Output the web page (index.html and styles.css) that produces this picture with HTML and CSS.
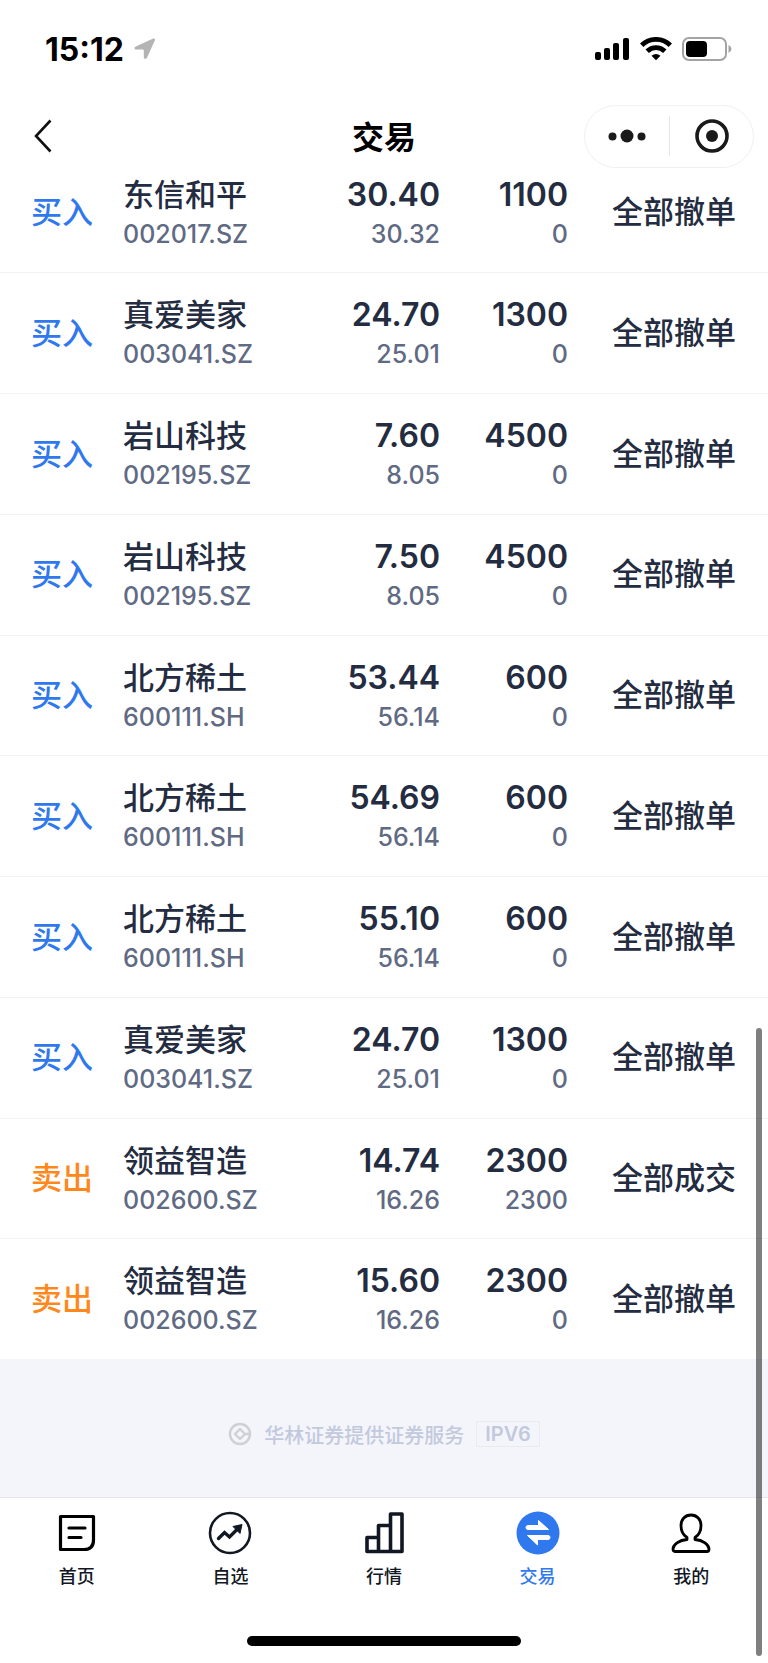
FILE: index.html
```html
<!DOCTYPE html>
<html lang="zh-CN">
<head>
  <meta charset="UTF-8">
  <meta name="viewport" content="width=device-width, initial-scale=1.0">
  <title>交易</title>
  <link rel="stylesheet" href="styles.css">
</head>
<body>
  <header class="top">
    <div class="status-bar">
      <span class="time">15:12</span>
      <svg class="location" width="22" height="22" viewBox="0 0 22 22" fill="#b4b4b4"><path d="M19.2.6 1.8 8.6C-.2 9.6.2 11.600 2.200 11.600H8.800Q9.800 11.600 9.800 12.600V19C9.800 21.200 12 21.600 13 19.800L20.800 2.600C21.500 1 20.600 0 19.200.6Z"/></svg>
      <div class="status-icons">
        <svg width="35" height="24" viewBox="0 0 35 24"><rect x="0" y="15" width="6" height="8" rx="2"/><rect x="9" y="11" width="6" height="12" rx="2"/><rect x="18" y="6" width="6" height="17" rx="2"/><rect x="28" y="1" width="6" height="22" rx="2"/></svg>
        <svg width="32" height="24" viewBox="0 0 32 24"><g fill="none" stroke="#000" stroke-width="4.800"><path d="M1.700 8.200A20.500 20.500 0 0 1 30.300 8.200"/><path d="M7.200 14.200A12.500 12.500 0 0 1 24.800 14.200"/></g><path d="M11.500 18.800Q16 15.400 20.500 18.800L16 23.200Z"/></svg>
        <svg width="50" height="24" viewBox="0 0 50 24"><rect x="1" y="1" width="43" height="22" rx="6" fill="none" stroke="#a3a3a3" stroke-width="2"/><rect x="4" y="4" width="21" height="16" rx="4"/><path d="M46.500 8Q49.500 9.500 49.500 12T46.500 16Z" fill="#a3a3a3"/></svg>
      </div>
    </div>
    <div class="nav-bar">
      <button class="back" type="button" aria-label="返回">
        <svg width="18" height="34" viewBox="0 0 18 34"><path d="M16.500 1.500 2 17 16.500 32.500" fill="none" stroke="#111" stroke-width="2.600"/></svg>
      </button>
      <h1>交易</h1>
      <div class="capsule">
        <button type="button" aria-label="更多">
          <svg width="38" height="14" viewBox="0 0 38 14" fill="#1a1a1a"><circle cx="4.500" cy="7.500" r="4"/><circle cx="19" cy="7" r="6.500"/><circle cx="33.500" cy="7.500" r="4"/></svg>
        </button>
        <button type="button" aria-label="关闭">
          <svg width="34" height="34" viewBox="0 0 34 34" fill="#1a1a1a"><circle cx="17" cy="17" r="15" fill="none" stroke="#1a1a1a" stroke-width="3.600"/><circle cx="17" cy="17" r="6"/></svg>
        </button>
      </div>
    </div>
  </header>

  <table class="orders">
    <tbody>
      <tr><td class="side buy">买入</td><td class="stock"><b>东信和平</b><small>002017.SZ</small></td><td class="num"><b>30.40</b><small>30.32</small></td><td class="num"><b>1100</b><small>0</small></td><td class="state">全部撤单</td></tr>
      <tr><td class="side buy">买入</td><td class="stock"><b>真爱美家</b><small>003041.SZ</small></td><td class="num"><b>24.70</b><small>25.01</small></td><td class="num"><b>1300</b><small>0</small></td><td class="state">全部撤单</td></tr>
      <tr><td class="side buy">买入</td><td class="stock"><b>岩山科技</b><small>002195.SZ</small></td><td class="num"><b>7.60</b><small>8.05</small></td><td class="num"><b>4500</b><small>0</small></td><td class="state">全部撤单</td></tr>
      <tr><td class="side buy">买入</td><td class="stock"><b>岩山科技</b><small>002195.SZ</small></td><td class="num"><b>7.50</b><small>8.05</small></td><td class="num"><b>4500</b><small>0</small></td><td class="state">全部撤单</td></tr>
      <tr><td class="side buy">买入</td><td class="stock"><b>北方稀土</b><small>600111.SH</small></td><td class="num"><b>53.44</b><small>56.14</small></td><td class="num"><b>600</b><small>0</small></td><td class="state">全部撤单</td></tr>
      <tr><td class="side buy">买入</td><td class="stock"><b>北方稀土</b><small>600111.SH</small></td><td class="num"><b>54.69</b><small>56.14</small></td><td class="num"><b>600</b><small>0</small></td><td class="state">全部撤单</td></tr>
      <tr><td class="side buy">买入</td><td class="stock"><b>北方稀土</b><small>600111.SH</small></td><td class="num"><b>55.10</b><small>56.14</small></td><td class="num"><b>600</b><small>0</small></td><td class="state">全部撤单</td></tr>
      <tr><td class="side buy">买入</td><td class="stock"><b>真爱美家</b><small>003041.SZ</small></td><td class="num"><b>24.70</b><small>25.01</small></td><td class="num"><b>1300</b><small>0</small></td><td class="state">全部撤单</td></tr>
      <tr><td class="side sell">卖出</td><td class="stock"><b>领益智造</b><small>002600.SZ</small></td><td class="num"><b>14.74</b><small>16.26</small></td><td class="num"><b>2300</b><small>2300</small></td><td class="state">全部成交</td></tr>
      <tr><td class="side sell">卖出</td><td class="stock"><b>领益智造</b><small>002600.SZ</small></td><td class="num"><b>15.60</b><small>16.26</small></td><td class="num"><b>2300</b><small>0</small></td><td class="state">全部撤单</td></tr>
    </tbody>
  </table>

  <div class="provider">
    <svg width="24" height="24" viewBox="0 0 24 24" fill="none" stroke="#cfd0d5"><circle cx="12" cy="12" r="10" stroke-width="2.400"/><path d="M17 12 12 17 7 12 12 7ZM16 12H22" stroke-width="2.400" stroke-linejoin="round"/></svg>
    <span>华林证券提供证券服务</span>
    <span class="tag">IPV6</span>
  </div>

  <nav class="tabs">
    <a href="#home">
      <svg width="44" height="44" viewBox="0 0 44 44" fill="none" stroke="#000" stroke-width="3.200" stroke-linecap="round" stroke-linejoin="round"><path d="M5.500 5.500H38.500V29Q38.500 38.500 29 38.500H5.500Z"/><path d="M14 17H30M14 26.500H26"/></svg>
      首页
    </a>
    <a href="#watchlist">
      <svg width="44" height="44" viewBox="0 0 44 44" fill="none" stroke="#111723"><circle cx="22" cy="22" r="20" stroke-width="2.600"/><path d="M10.500 27.500 16.500 21.500 21.500 26 29.500 18" stroke-width="3.400" stroke-linecap="round"/><path d="M25 15.500 34 13.500 32 22.500Z" fill="#111723" stroke-linejoin="round"/></svg>
      自选
    </a>
    <a href="#market">
      <svg width="44" height="44" viewBox="0 0 44 44" fill="none" stroke="#111723" stroke-width="3.600" stroke-linejoin="round"><path d="M5 40.500V26.500H16.500V40.500ZM16.500 40.500V14.500H28.500V40.500ZM28.500 40.500V3H40V40.500Z"/></svg>
      行情
    </a>
    <a class="active" href="#trade">
      <svg width="44" height="44" viewBox="0 0 44 44"><circle cx="22" cy="22" r="21.500" fill="#2f78ee"/><path d="M12 14.500H22.500V9.500Q27 13.500 32.500 18.500H12A2 2 0 0 1 12 14.500ZM32 24.500A2 2 0 0 1 32 28.500H21.500V34Q17 29.500 11.500 24.500Z" fill="#fff" stroke="#fff" stroke-linejoin="round"/></svg>
      交易
    </a>
    <a href="#mine">
      <svg width="44" height="44" viewBox="0 0 44 44" fill="none" stroke="#000" stroke-width="2.800" stroke-linejoin="round"><path d="M18 26.500C14 24 12 19.500 12 14.500C12 8.500 16 4 22 4S32 8.500 32 14.500C32 19.500 30 24 26 26.500V28.500C34 29 40 34 40 38Q40 40.500 38 40.500H6Q4 40.500 4 38C4 34 10 29 18 28.500Z"/></svg>
      我的
    </a>
  </nav>
  <div class="home-indicator"></div>
  <div class="scrollbar"></div>
</body>
</html>
```

FILE: styles.css
```css
* {
  box-sizing: border-box;
}
body {
  margin: 0;
  min-height: 100vh;
  display: flex;
  flex-direction: column;
  background: #fff;
  color: #232c40;
  font-family: Inter, "Noto Sans CJK SC", sans-serif;
  font-weight: 500;
}
svg {
  display: block;
  flex: none;
}
button {
  padding: 0;
  border: none;
  background: none;
  display: flex;
  align-items: center;
  justify-content: center;
}

/* status bar and title */
.status-bar {
  display: flex;
  align-items: center;
  height: 104px;
  padding: 0 36px 6px 45px;
  color: #000;
}
.time {
  font-size: 32px;
  font-weight: 700;
}
.location {
  margin-left: 10px;
}
.status-icons {
  display: flex;
  align-items: center;
  gap: 10px;
  margin-left: auto;
}
.nav-bar {
  display: grid;
  grid-template-columns: 1fr auto 1fr;
  align-items: center;
  height: 64px;
  padding: 0 14px 0 34px;
}
.back {
  justify-self: start;
}
h1 {
  margin: 0;
  padding: 4px 20px 0 0;
  color: #000;
  font-size: 32px;
  line-height: 40px;
  font-weight: 700;
}
.capsule {
  display: flex;
  justify-self: end;
  width: 170px;
  height: 63px;
  border: 1px solid #f0f0f0;
  border-radius: 32px;
  background: #fff;
}
.capsule button {
  flex: 1;
}
.capsule button + button::before {
  content: "";
  width: 1px;
  height: 40px;
  margin-right: auto;
  background: #e6e6e6;
}
.capsule button + button svg {
  margin-right: auto;
}

/* orders, first row starts under the header */
.orders {
  flex: 1;
  width: 100%;
  margin-top: -15px;
  border-collapse: collapse;
  table-layout: fixed;
}
td {
  padding: 0;
  vertical-align: middle;
  border-bottom: 1px solid #f1f2f5;
  white-space: nowrap;
}
tr:last-child td {
  border-bottom: none;
}
b,
small {
  display: block;
  font-weight: 500;
}
b {
  font-size: 32px;
  line-height: 42px;
}
small {
  color: #606a83;
  font-size: 25px;
  line-height: 36px;
}
.side,
.state {
  padding-bottom: 6px;
  font-size: 31px;
}
.side {
  width: 123px;
  padding-left: 31px;
}
.buy {
  color: #2f78ee;
}
.sell {
  color: #ff881c;
}
.stock b {
  font-size: 31px;
}
.num {
  width: 128px;
  text-align: right;
}
.num b {
  font-weight: 600;
}
.state {
  width: 200px;
  padding-left: 44px;
}

.provider {
  display: flex;
  align-items: center;
  justify-content: center;
  gap: 12px;
  height: 138px;
  padding-top: 12px;
  background: #f4f5fa;
  color: #c3c9dd;
  font-size: 20px;
}
.tag {
  padding: 0 8px;
  border: 1px solid #e9ebf1;
  line-height: 24px;
  font-weight: 600;
}

/* bottom tabs */
.tabs {
  display: flex;
  height: 139px;
  padding-top: 13px;
  border-top: 1px solid #e4e6eb;
}
.tabs a {
  flex: 1;
  display: flex;
  flex-direction: column;
  align-items: center;
  gap: 9px;
  color: #111723;
  font-size: 18px;
  line-height: 26px;
  text-decoration: none;
}
.tabs .active {
  color: #2f78ee;
}
.home-indicator {
  width: 274px;
  height: 10px;
  margin: 0 auto 17px;
  border-radius: 5px;
  background: #000;
}
.scrollbar {
  position: fixed;
  top: 1028px;
  right: 6px;
  bottom: 7px;
  width: 6px;
  border-radius: 3px;
  background: rgba(0, 0, 0, 0.5);
}
```
